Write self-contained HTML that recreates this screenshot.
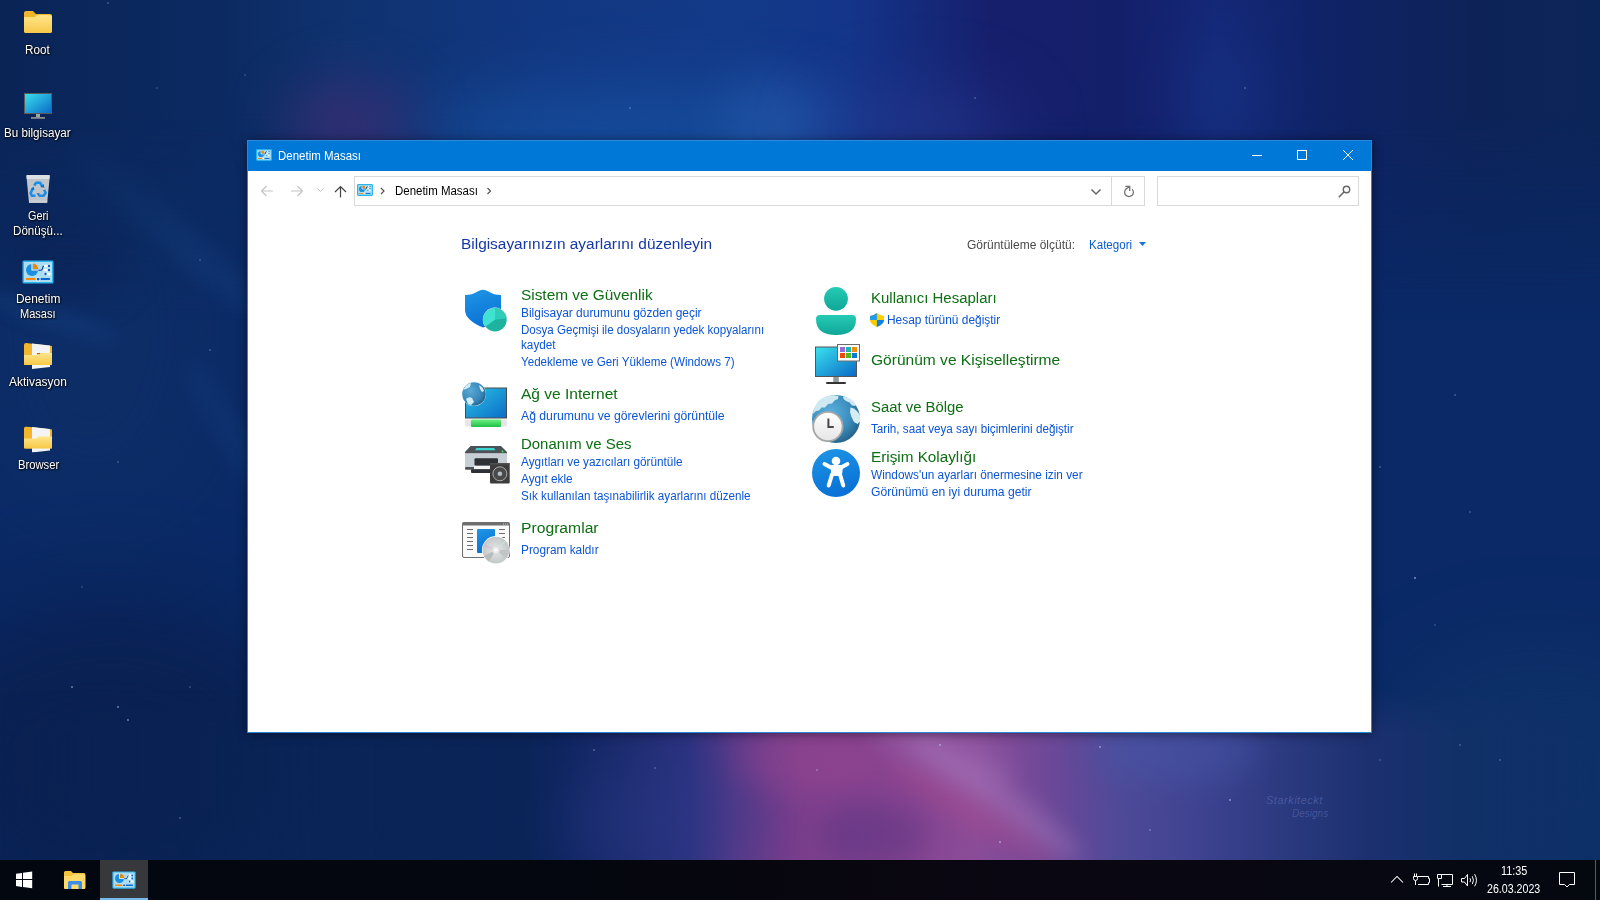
<!DOCTYPE html>
<html><head><meta charset="utf-8">
<style>
*{margin:0;padding:0;box-sizing:border-box}
html,body{width:1600px;height:900px;overflow:hidden}
body{position:relative;font-family:"Liberation Sans", sans-serif;background:#0c2a5c}
.t{position:absolute;white-space:nowrap;transform-origin:0 0}
.box{position:absolute}
</style></head><body>
<div class="box" style="left:0;top:0;width:1600px;height:900px;overflow:hidden;background:#0a2966">
<!-- left strip variation -->
<div class="box" style="left:-60px;top:120px;width:300px;height:420px;border-radius:50%;background:#0f3068;opacity:.6;filter:blur(50px)"></div>
<div class="box" style="left:-100px;top:600px;width:420px;height:320px;border-radius:50%;background:#0a2050;opacity:.9;filter:blur(50px)"></div>
<div class="box" style="left:30px;top:205px;width:260px;height:34px;border-radius:50%;background:#1b4c8e;opacity:.35;filter:blur(10px);transform:rotate(42deg)"></div>
<div class="box" style="left:-20px;top:305px;width:140px;height:22px;border-radius:50%;background:#1b4c8e;opacity:.3;filter:blur(8px);transform:rotate(18deg)"></div>
<div class="box" style="left:0px;top:200px;width:130px;height:100px;border-radius:50%;background:#081a48;opacity:.35;filter:blur(20px)"></div>
<div class="box" style="left:150px;top:420px;width:160px;height:24px;border-radius:50%;background:#1b4c8e;opacity:.25;filter:blur(10px);transform:rotate(60deg)"></div>
<!-- top band -->
<div class="box" style="left:0;top:0;width:1600px;height:320px;background:linear-gradient(90deg,#0a2456 0%,#0c2a62 14%,#0f3370 22%,#123782 34%,#133a88 46%,#14358a 53%,#161f6c 62%,#141f6a 70%,#142878 76%,#0f2264 84%,#0d2358 92%,#0c2558 100%);-webkit-mask-image:linear-gradient(180deg,#000 0%,#000 35%,transparent 100%)"></div>
<div class="box" style="left:410px;top:90px;width:450px;height:100px;border-radius:50%;background:#1650a0;opacity:.8;filter:blur(35px)"></div>
<div class="box" style="left:720px;top:80px;width:110px;height:90px;border-radius:50%;background:#2a5cb0;opacity:.5;filter:blur(25px)"></div>
<div class="box" style="left:285px;top:80px;width:130px;height:90px;border-radius:50%;background:#3a2e74;opacity:.8;filter:blur(28px)"></div>
<div class="box" style="left:820px;top:90px;width:200px;height:90px;border-radius:50%;background:#283890;opacity:.6;filter:blur(35px)"></div>
<div class="box" style="left:1190px;top:40px;width:70px;height:110px;border-radius:50%;background:#1a3a8e;opacity:.45;filter:blur(30px)"></div>
<!-- right strip -->
<div class="box" style="left:1380px;top:650px;width:320px;height:250px;border-radius:50%;background:#10346a;opacity:.8;filter:blur(45px)"></div>
<!-- bottom nebula -->
<div class="box" style="left:0;top:690px;width:1600px;height:170px;background:linear-gradient(90deg,rgba(10,36,86,0) 0%,rgba(10,36,86,.9) 20%,#0b2458 33%,#0e2560 35%,#1a2a6c 38.5%,#2c3280 43%,#5a3a8a 46%,#7a3e8c 50%,#8a4490 56%,#8a4c98 61%,#6a4898 66%,#4e4a98 70%,#3e4290 75%,#2c3a80 80%,#1c3070 85.5%,#113068 91%,rgba(14,48,104,.6) 100%);-webkit-mask-image:linear-gradient(180deg,transparent 0%,#000 25%,#000 100%)"></div>
<div class="box" style="left:1090px;top:715px;width:170px;height:70px;border-radius:50%;background:#4658a8;opacity:.45;filter:blur(16px)"></div>
<div class="box" style="left:740px;top:725px;width:130px;height:70px;border-radius:50%;background:#a04890;opacity:.4;filter:blur(16px)"></div>
<div class="box" style="left:890px;top:780px;width:210px;height:34px;border-radius:50%;background:#b080c0;opacity:.4;filter:blur(10px);transform:rotate(36deg)"></div>
<div class="box" style="left:880px;top:800px;width:190px;height:30px;border-radius:50%;background:#a84a8c;opacity:.4;filter:blur(10px);transform:rotate(32deg)"></div>
<div class="box" style="left:560px;top:760px;width:200px;height:120px;border-radius:50%;background:#2a3a88;opacity:.35;filter:blur(25px)"></div>
<div class="box" style="left:870px;top:728px;width:150px;height:50px;border-radius:50%;background:#a070b8;opacity:.35;filter:blur(12px);transform:rotate(20deg)"></div>
<div class="box" style="left:820px;top:800px;width:110px;height:70px;border-radius:50%;background:#4a3080;opacity:.4;filter:blur(15px)"></div>
<div class="t" style="left:1266px;top:795px;font-size:11px;line-height:11px;font-style:italic;color:rgba(130,150,220,.35);letter-spacing:.5px">Starkiteckt</div>
<div class="t" style="left:1292px;top:809px;font-size:10px;line-height:10px;font-style:italic;color:rgba(130,150,220,.32)">Designs</div>
<svg class="box" style="left:0;top:0" width="1600" height="900"><g fill="#c8d8ff">
<circle cx="108" cy="3" r=".8" opacity=".5"/><circle cx="157" cy="88" r=".7" opacity=".4"/><circle cx="245" cy="75" r=".7" opacity=".4"/><circle cx="630" cy="108" r=".8" opacity=".5"/><circle cx="975" cy="98" r=".8" opacity=".5"/><circle cx="1245" cy="88" r=".8" opacity=".5"/><circle cx="1262" cy="185" r=".8" opacity=".5"/><circle cx="1290" cy="225" r=".7" opacity=".4"/>
<circle cx="1380" cy="467" r=".8" opacity=".5"/><circle cx="1415" cy="578" r="1" opacity=".6"/><circle cx="1455" cy="395" r=".8" opacity=".5"/><circle cx="1210" cy="695" r=".8" opacity=".5"/><circle cx="1470" cy="512" r=".8" opacity=".5"/><circle cx="1435" cy="625" r=".7" opacity=".4"/><circle cx="1500" cy="760" r=".8" opacity=".5"/><circle cx="1460" cy="745" r=".8" opacity=".5"/>
<circle cx="72" cy="687" r=".9" opacity=".6"/><circle cx="118" cy="707" r=".9" opacity=".6"/><circle cx="128" cy="720" r=".9" opacity=".6"/><circle cx="82" cy="587" r=".7" opacity=".4"/><circle cx="190" cy="687" r=".7" opacity=".5"/><circle cx="180" cy="818" r=".8" opacity=".5"/><circle cx="210" cy="350" r=".8" opacity=".5"/><circle cx="118" cy="462" r=".7" opacity=".5"/><circle cx="200" cy="260" r=".7" opacity=".5"/>
<circle cx="594" cy="750" r=".8" opacity=".6"/><circle cx="655" cy="768" r=".8" opacity=".5"/><circle cx="817" cy="770" r=".8" opacity=".6"/><circle cx="940" cy="745" r=".9" opacity=".6"/><circle cx="1100" cy="747" r=".9" opacity=".6"/><circle cx="1150" cy="830" r=".8" opacity=".6"/><circle cx="1000" cy="842" r=".9" opacity=".6"/><circle cx="1230" cy="800" r=".9" opacity=".6"/><circle cx="1380" cy="760" r=".7" opacity=".4"/>
</g></svg>
</div>

<div class="box" style="left:247px;top:140px;width:1125px;height:593px;box-shadow:0 1px 10px rgba(0,0,0,.45)"></div>
<div class="box" style="left:247px;top:140px;width:1125px;height:593px;background:#fff;border:1px solid #2b86d4;border-top-color:#2c8ad8"></div>
<div class="box" style="left:248px;top:141px;width:1123px;height:30px;background:#0078d7"></div>
<div class="box" style="left:354px;top:176px;width:791px;height:30px;border:1px solid #d9d9d9"></div>
<div class="box" style="left:1111px;top:177px;width:1px;height:28px;background:#d9d9d9"></div>
<div class="box" style="left:1157px;top:176px;width:202px;height:30px;border:1px solid #d9d9d9"></div>
<div class="box" style="left:0;top:860px;width:1600px;height:40px;background:linear-gradient(90deg,#03070f 0%,#04070f 35%,#08060f 50%,#0a0712 65%,#090812 78%,#060812 90%,#04080f 100%)"></div>
<div class="box" style="left:100px;top:860px;width:48px;height:40px;background:#37383b"></div>
<div class="box" style="left:100px;top:898px;width:48px;height:2px;background:#76b9ed"></div>
<div class="box" style="left:1595px;top:860px;width:1px;height:40px;background:#5a5a5e"></div>
<svg class="box" style="left:0;top:0" width="1600" height="900" viewBox="0 0 1600 900">
<defs>
<linearGradient id="gBlue" x1="0" y1="0" x2="0.3" y2="1"><stop offset="0" stop-color="#1e96e6"/><stop offset="1" stop-color="#0a72d6"/></linearGradient>
<linearGradient id="gScreen" x1="0" y1="0" x2="1" y2="1"><stop offset="0" stop-color="#3ae2ee"/><stop offset="1" stop-color="#0a68c6"/></linearGradient>
<linearGradient id="gScreen2" x1="0" y1="0" x2="1" y2="1"><stop offset="0" stop-color="#2cc4e4"/><stop offset="1" stop-color="#0a6cc8"/></linearGradient>
<linearGradient id="gTeal" x1="0" y1="0" x2="0" y2="1"><stop offset="0" stop-color="#25cbb4"/><stop offset="1" stop-color="#10a698"/></linearGradient>
<radialGradient id="gGlobe" cx="0.35" cy="0.35" r="0.75"><stop offset="0" stop-color="#5aaad6"/><stop offset="0.7" stop-color="#3584b6"/><stop offset="1" stop-color="#1d5a80"/></radialGradient>
<radialGradient id="gCD" cx="0.5" cy="0.5" r="0.5"><stop offset="0" stop-color="#f4f6f6"/><stop offset="0.35" stop-color="#d8dcdc"/><stop offset="1" stop-color="#c4c8c8"/></radialGradient>
<linearGradient id="gFolder" x1="0" y1="0" x2="0" y2="1"><stop offset="0" stop-color="#ffe58a"/><stop offset="1" stop-color="#f7c848"/></linearGradient>
<linearGradient id="gGreen" x1="0" y1="0" x2="0" y2="1"><stop offset="0" stop-color="#6af27e"/><stop offset="1" stop-color="#1fbf48"/></linearGradient>
<radialGradient id="gGlobe2" cx="0.38" cy="0.38" r="0.72"><stop offset="0" stop-color="#5cb2e0"/><stop offset="0.6" stop-color="#3a8cbc"/><stop offset="1" stop-color="#1f5a7e"/></radialGradient>
<linearGradient id="gClock" x1="0" y1="0" x2="0" y2="1"><stop offset="0" stop-color="#ffffff"/><stop offset="1" stop-color="#e6e6e6"/></linearGradient>
<symbol id="cps" viewBox="0 0 16 12">
 <rect x="0.6" y="0.6" width="14.8" height="10.8" rx="0.8" fill="#b2e2f7" stroke="#2eb2ef" stroke-width="1.2"/>
 <circle cx="5" cy="5" r="3.1" fill="#1a8ee0"/>
 <path d="M5.4 1.5 Q8.5 1.7 8.5 4.6 L5.4 4.6 Z" fill="#f08a00"/>
 <path d="M5 1.8 V5 H8.3" stroke="#e8f6fc" stroke-width="0.7" fill="none"/>
 <path d="M8.4 5.2 Q9.2 5.3 9.4 4 Q9.6 2.5 10.8 2.5" stroke="#0a4ca6" stroke-width="0.9" fill="none"/>
 <rect x="10.8" y="2" width="1.6" height="1" fill="#fff"/><circle cx="13" cy="2.5" r="0.6" fill="#0a5cc0"/>
 <rect x="10.8" y="4" width="1.6" height="1" fill="#fff"/><circle cx="13" cy="4.5" r="0.6" fill="#0a5cc0"/>
 <circle cx="11" cy="6.5" r="0.6" fill="#0a5cc0"/><rect x="11.6" y="6" width="1.6" height="1" fill="#fff"/>
 <rect x="2" y="8.9" width="4.5" height="1" fill="#f08a00"/><rect x="6.5" y="8.9" width="1.5" height="1" fill="#fff"/><rect x="8.5" y="8.9" width="5" height="1" fill="#0a6ad0"/>
</symbol>
<symbol id="cp" viewBox="0 0 32 24">
 <rect x="0.5" y="0.5" width="31" height="23" rx="1.5" fill="#2fb6f0"/>
 <rect x="2" y="2" width="28" height="20" fill="#acdcf2"/>
 <circle cx="10" cy="10" r="6" fill="#1a8ee0"/>
 <path d="M10.8 3.6 A6.2 6.2 0 0 1 16.4 9.2 L10.8 9.2 Z" fill="#f08a00"/>
 <path d="M10 3.5 L10 10 L16.5 10" stroke="#f4fbff" stroke-width="1.1" fill="none"/>
 <rect x="21" y="4.2" width="8.5" height="3.6" rx="1.8" fill="#c6ebfa"/>
 <rect x="21" y="8.2" width="8.5" height="3.6" rx="1.8" fill="#c6ebfa"/>
 <rect x="21" y="12.2" width="8.5" height="3.6" rx="1.8" fill="#c6ebfa"/>
 <path d="M16.3 10.2 L18.8 10.2 Q20.3 10.2 20.5 8.5 L20.8 7.2 Q21 6 22.3 6 L22.6 6" stroke="#0a3c88" stroke-width="1.1" fill="none"/>
 <rect x="22.2" y="5" width="3.2" height="2" fill="#fff"/><circle cx="27" cy="6" r="1.2" fill="#0a5cc0"/>
 <rect x="22.2" y="9" width="3.2" height="2" fill="#fff"/><circle cx="27" cy="10" r="1.2" fill="#0a5cc0"/>
 <circle cx="23.5" cy="14" r="1.2" fill="#0a5cc0"/><rect x="25" y="13" width="3.4" height="2" fill="#fff"/>
 <rect x="4" y="18.1" width="10" height="2" rx="0.5" fill="#ff8a00"/>
 <rect x="18.2" y="18.1" width="9.8" height="2" rx="0.5" fill="#0a6ad0"/>
 <circle cx="16.1" cy="19.1" r="2" fill="#0a5cc0" stroke="#fff" stroke-width="1"/>
</symbol>
<symbol id="folder" viewBox="0 0 28 22">
 <path d="M0 2 Q0 0 2 0 L9 0 L12 3 L26 3 Q28 3 28 5 L28 20 Q28 22 26 22 L2 22 Q0 22 0 20 Z" fill="#f2b52c"/>
 <path d="M0 6 L11 6 L13 4 L26 4 Q28 4 28 6 L28 20 Q28 22 26 22 L2 22 Q0 22 0 20 Z" fill="url(#gFolder)"/>
</symbol>
<symbol id="ofolder" viewBox="0 0 28 26">
 <path d="M0 2 Q0 0 2 0 L28 3 L28 22 L0 22 Z" fill="#f2b52c"/>
 <path d="M8 0.5 L26 2.5 L26 24 L8 26 Z" fill="#f4f4f4"/>
 <path d="M0 12 L12 12 L14 10 L28 10 L28 21 Q28 22 26 22 L2 22 Q0 22 0 20 Z" fill="url(#gFolder)"/>
</symbol>
</defs>

<!-- title bar icon -->
<use href="#cps" x="256" y="149" width="16" height="12"/>
<!-- title controls -->
<path d="M1252 155.5 H1262" stroke="#fff" stroke-width="1"/>
<rect x="1297.5" y="150.5" width="9" height="9" stroke="#fff" stroke-width="1" fill="none"/>
<path d="M1343 150 L1353 160 M1353 150 L1343 160" stroke="#fff" stroke-width="1"/>
<!-- toolbar -->
<path d="M261.5 191 H273 M261.5 191 L266.5 186 M261.5 191 L266.5 196" stroke="#c4c4c4" stroke-width="1.2" fill="none"/>
<path d="M302.5 191 H291 M302.5 191 L297.5 186 M302.5 191 L297.5 196" stroke="#c4c4c4" stroke-width="1.2" fill="none"/>
<path d="M317.5 188.5 L320.5 191.5 L323.5 188.5" stroke="#c8c8c8" stroke-width="1" fill="none"/>
<path d="M340.5 197.5 V186.5 M335 192 L340.5 186.5 L346 192" stroke="#444" stroke-width="1.2" fill="none"/>
<use href="#cps" x="357" y="184" width="16" height="12"/>
<path d="M381 188 L384 191 L381 194" stroke="#555" stroke-width="1.2" fill="none"/>
<path d="M487.5 188 L490.5 191 L487.5 194" stroke="#555" stroke-width="1.2" fill="none"/>
<path d="M1091.5 189.5 L1096 194 L1100.5 189.5" stroke="#666" stroke-width="1.5" fill="none"/>
<path d="M1132.1 189.1 A4.4 4.4 0 1 1 1125.9 189.1 L1129.3 186.7 M1125.2 186.4 H1129.7 V190.9" stroke="#727272" stroke-width="1.3" fill="none"/>
<circle cx="1346.5" cy="189.5" r="3.2" stroke="#666" stroke-width="1.4" fill="none"/>
<path d="M1344.2 191.8 L1338.8 197.2" stroke="#666" stroke-width="1.6"/>
<!-- kategori triangle -->
<path d="M1139 242 L1146 242 L1142.5 246 Z" fill="#1a6fd8"/>

<!-- Sistem ve Guvenlik shield -->
<path d="M465 295 Q472 295 477.5 291.5 Q480.5 289.8 483 289.8 Q485.5 289.8 488.5 291.5 Q494 295 501 295 L501 313 Q501 322 483 327.6 Q465 320 465 310 Z" fill="url(#gBlue)"/>
<circle cx="495" cy="319.8" r="12.2" fill="#fff"/>
<circle cx="495" cy="319.8" r="11.7" fill="#1db39f"/>
<path d="M495 319.8 L495 308.1 A11.7 11.7 0 0 0 485.6 326.6 Z" fill="#3ee3d2"/>
<path d="M495 319.8 L495 308.1 A11.7 11.7 0 0 1 506.6 318.2 Z" fill="#2fcdb9"/>

<!-- Network icon -->
<rect x="465.5" y="388" width="41" height="30" fill="url(#gScreen2)" stroke="#4a4a4a" stroke-width="1"/>
<rect x="465" y="419.5" width="42" height="7" rx="1" fill="#e6e6e6"/>
<rect x="471" y="419.5" width="30" height="7.5" rx="1" fill="url(#gGreen)"/>
<circle cx="474" cy="394" r="12" fill="#fff"/>
<circle cx="474" cy="394" r="11.8" fill="url(#gGlobe)"/>
<path d="M466 399 Q469 396 472 398 L474 402 L471 405 L468 404 Z M463 390 Q466 384 471 383 L470 387 L466 389 Z M479 385 Q483 387 484 391 L482 392 L480 389 Z" fill="#d4ecf6"/>

<!-- Printer icon -->
<path d="M470.5 446 L501 446 L507 452 L507 453.5 L465 453.5 L465 452 Z" fill="#4d5258"/>
<path d="M476.5 448 L494 448 L495.5 450.2 L475 450.2 Z" fill="#3ad8d0"/>
<circle cx="502.5" cy="451.5" r="0.9" fill="#3cf05c"/>
<rect x="465" y="453.5" width="42" height="13.5" fill="#c6ced6"/>
<rect x="465" y="467" width="25" height="2.7" rx="1" fill="#4d5258"/>
<rect x="474.5" y="458.2" width="23.5" height="7.5" rx="1" fill="#2d3034"/>
<rect x="474" y="465.8" width="17" height="3.4" fill="#f4f4f4"/>
<rect x="471" y="469.2" width="20" height="3.8" rx="1" fill="#2d3034"/>
<rect x="490" y="463" width="19.7" height="20.6" rx="1" fill="#3c3c3c"/>
<rect x="490" y="463" width="19.7" height="1.6" fill="#505050"/>
<circle cx="499.9" cy="473.8" r="7" fill="#4a4a4a" stroke="#c8c8c8" stroke-width="0.8"/>
<circle cx="499.9" cy="473.8" r="2.3" fill="#b4c0c8"/>

<!-- Programs icon -->
<rect x="462.5" y="522.5" width="47" height="35" rx="1.5" fill="#fafafa" stroke="#6e6e6e" stroke-width="1"/>
<rect x="462.5" y="522.5" width="47" height="3" fill="#6e6e6e"/>
<g fill="#6e6e6e"><circle cx="503.5" cy="524" r="0.55" fill="#ddd"/><circle cx="505.6" cy="524" r="0.55" fill="#ddd"/><circle cx="507.6" cy="524" r="0.55" fill="#ddd"/>
<rect x="467" y="529" width="6" height="1"/><rect x="467" y="533" width="6" height="1"/><rect x="467" y="537" width="6" height="1"/><rect x="467" y="541" width="6" height="1"/><rect x="467" y="545" width="6" height="1"/><rect x="467" y="549" width="6" height="1"/>
<rect x="499" y="529" width="6" height="1"/><rect x="499" y="533" width="6" height="1"/><rect x="499" y="537" width="6" height="1"/></g>
<rect x="477" y="529" width="18" height="24" rx="1" fill="url(#gBlue)"/>
<circle cx="495.9" cy="550.1" r="14" fill="#fff"/>
<circle cx="495.9" cy="550.1" r="13.4" fill="url(#gCD)"/>
<path d="M495.9 550.1 L484 556 A13.4 13.4 0 0 0 489 561.5 Z" fill="#b8bcbc"/>
<path d="M495.9 550.1 L509 550 A13.4 13.4 0 0 1 506 558 Z" fill="#c0c4c4"/>
<path d="M492 548.5 L484.5 545.5" stroke="#f0a0e8" stroke-width="1" opacity=".8"/><path d="M499.5 547 L505.5 541" stroke="#c8f0d0" stroke-width="1" opacity=".8"/>
<circle cx="495.9" cy="550.1" r="3.8" fill="#ececec" stroke="#d0d0d0" stroke-width="0.6"/>
<circle cx="495.9" cy="550.1" r="1.4" fill="#fff"/>

<!-- User icon -->
<circle cx="836" cy="298.8" r="11.9" fill="url(#gTeal)"/>
<path d="M816 319 Q816 315 820 315 L852 315 Q856 315 856 319 Q856 335 836 335 Q816 335 816 319 Z" fill="url(#gTeal)"/>
<!-- UAC shield -->
<path d="M870 316 Q873 316 876.9 313 Q880.8 316 884 316 L884 320 Q884 324 876.9 327 Q870 324 870 320 Z" fill="#ffcc00"/>
<path d="M870 316 Q873 316 876.9 313 L876.9 320 L870 320 Z" fill="#1e9ae8"/>
<path d="M876.9 320 L884 320 Q884 324 876.9 327 Z" fill="#0a84e8"/>

<!-- Appearance monitor -->
<rect x="815.5" y="347" width="41" height="29.5" fill="url(#gScreen)" stroke="#555" stroke-width="1"/>
<rect x="833.3" y="377" width="5.5" height="5" fill="#8f999f"/>
<rect x="826" y="382" width="20" height="2" rx="1" fill="#333"/>
<rect x="837.5" y="344.5" width="22" height="16.5" fill="#fff" stroke="#6e6a6a" stroke-width="1"/>
<rect x="840" y="347" width="5" height="5" fill="#9a6ad8"/><rect x="846" y="347" width="5" height="5" fill="#1ab8a8"/><rect x="852" y="347" width="5" height="5" fill="#f08a10"/>
<rect x="840" y="353" width="5" height="5" fill="#e84a10"/><rect x="846" y="353" width="5" height="5" fill="#50b820"/><rect x="852" y="353" width="5" height="5" fill="#0a78d8"/>

<!-- Globe + clock -->
<circle cx="836" cy="419" r="24" fill="url(#gGlobe2)"/>
<path d="M813 414 Q814 405 820 399.5 Q827 395 834 395.2 L838.5 396 L838 399 L834.5 400.5 L832 403.5 L828 404 L825 407.5 L821.5 407.5 L819 410.5 L816 411 Z" fill="#cfe8f2"/>
<path d="M843 396.2 Q850 397.5 855 402.5 L855.5 406 L852 405.5 L849.5 402.5 L846 401 L843.5 399 Z" fill="#cfe8f2"/>
<path d="M850.5 407.5 Q857.5 409 860 416 L860 421.5 L857.5 424 L854 422 L851.5 417 L850 412 Z" fill="#d6ecf4"/>
<circle cx="827.9" cy="426.5" r="15.6" fill="#a6a6a6"/>
<circle cx="827.9" cy="426.5" r="13.8" fill="url(#gClock)"/>
<path d="M828.4 418.4 V427 H833.8" stroke="#4a4a4a" stroke-width="2" fill="none"/>

<!-- Accessibility -->
<circle cx="836" cy="473" r="24" fill="url(#gBlue)"/>
<circle cx="836" cy="461" r="4.3" fill="#fff"/>
<path d="M824.5 464 L831.5 467.8 M847.5 464 L840.5 467.8" stroke="#fff" stroke-width="4" stroke-linecap="round"/>
<path d="M831 467 L841 467 L840 474.5 L843.3 485.5 M832 474.5 L828.7 485.5" stroke="#fff" stroke-width="4" stroke-linecap="round" stroke-linejoin="round" fill="none"/>
<path d="M830.5 466.5 L841.5 466.5 L840.5 476 L831.5 476 Z" fill="#fff"/>

<!-- Desktop icons -->
<use href="#folder" x="24" y="11" width="28" height="22"/>
<rect x="24.5" y="93.5" width="27" height="20" fill="url(#gScreen)" stroke="#5a5a5a" stroke-width="1"/>
<rect x="36" y="114" width="4" height="3" fill="#9aa"/>
<rect x="31" y="117" width="14" height="1.8" fill="#8a8a8a"/>
<path d="M26.4 176 L49.8 176 L47.2 202.8 L29 202.8 Z" fill="#bfc5cb"/>
<path d="M26.4 175 L49.8 175 L49.4 179 L26.8 179 Z" fill="#dde0e3"/>
<path d="M29 200.5 L47.2 200.5 L47.2 202.8 L29 202.8 Z" fill="#cdd1d5"/>
<g stroke="#1a8ee8" stroke-width="2.6" fill="none" stroke-linejoin="round">
<path d="M34.2 185.5 L36.2 182.8 L40.2 182.8 L42.5 186.8"/>
<path d="M44.2 189.8 L45.6 193 L43.6 195.8 L39.5 195.8"/>
<path d="M35.5 195.8 L32 195.8 L30.6 193 L32.6 189"/>
</g>
<path d="M40.5 187 L44.5 187.8 L43.5 184 Z M36.5 193 L39.5 197.5 L39.5 193.5 Z M33.5 186.5 L30.5 189.5 L34.5 190 Z" fill="#0a6ed0"/>
<use href="#cp" x="22" y="260" width="32" height="24"/>
<use href="#ofolder" x="24" y="343" width="28" height="26"/>
<rect x="37" y="353" width="3" height="1.2" fill="#e05030"/>
<use href="#ofolder" x="24" y="426.5" width="28" height="26"/>

<!-- taskbar -->
<path d="M16 873.8 L22 872.9 L22 879 L16 879 Z M23 872.8 L32.2 871.6 L32.2 879 L23 879 Z M16 880 L22 880 L22 886.9 L16 886 Z M23 880 L32.2 880 L32.2 888.2 L23 887 Z" fill="#fff"/>
<path d="M64 872.5 Q64 871 65.5 871 L71 871 L73 873 L84 873 Q85.3 873 85.3 874.5 L85.3 887.5 Q85.3 889 84 889 L65.5 889 Q64 889 64 887.5 Z" fill="#f5c240"/>
<path d="M64 876 L72 876 L74 874 L84 874 Q85.3 874 85.3 875.5 L85.3 887.5 Q85.3 889 84 889 L65.5 889 Q64 889 64 887.5 Z" fill="#ffd96a"/>
<path d="M68 889 L68 882.5 Q68 881 69.5 881 L80.5 881 Q82 881 82 882.5 L82 889 L78.5 889 L78.5 884.5 L71.5 884.5 L71.5 889 Z" fill="#3a8ee8"/>
<use href="#cp" x="112" y="871" width="24" height="18"/>

<!-- tray -->
<path d="M1391 882.5 L1397 876.5 L1403 882.5" stroke="#fff" stroke-width="1.05" fill="none"/>
<g stroke="#fff" stroke-width="1" fill="none">
<path d="M1418 876.5 H1428.5 V878.5 H1429.5 V882.5 H1428.5 V884.5 H1418"/>
<path d="M1413.5 876.5 H1417.5 V878.5 Q1417.5 880.5 1415.5 880.5 Q1413.5 880.5 1413.5 878.5 Z"/>
<path d="M1414.5 873.5 V876.5 M1416.5 873.5 V876.5 M1415.5 880.5 V885"/>
<path d="M1441.5 874.5 H1452.5 V884.5 H1441.5 M1447 884.5 V886.5 M1443 886.5 H1451 M1437.5 874.5 H1441.5 V878.5 H1437.5 Z M1438.5 878.5 V886.5"/>
<path d="M1461.5 878.5 H1464.5 L1467.5 874.5 V886 L1464.5 882 H1461.5 Z"/>
<path d="M1470 878.3 Q1471.2 880.2 1470 882.1 M1472.3 876.3 Q1474.6 880.2 1472.3 884.1 M1474.6 874.2 Q1478.3 880.2 1474.6 886.3"/>
<path d="M1559.5 872.5 H1574.5 V884.5 H1569.5 L1567 887 L1564.5 884.5 H1559.5 Z"/>
</g>
</svg>

<div id="t0" class="t" style="left:278.00px;top:149.84px;font-size:12px;line-height:12px;color:#ffffff;transform:scaleX(0.9573);">Denetim Masası</div>
<div id="t1" class="t" style="left:394.60px;top:184.84px;font-size:12px;line-height:12px;color:#000000;transform:scaleX(0.9561);">Denetim Masası</div>
<div id="t2" class="t" style="left:461.00px;top:235.68px;font-size:15.5px;line-height:15.5px;color:#1538a8;transform:scaleX(0.9943);">Bilgisayarınızın ayarlarını düzenleyin</div>
<div id="t3" class="t" style="left:967.00px;top:238.84px;font-size:12px;line-height:12px;color:#4a4a4a;transform:scaleX(0.9994);">Görüntüleme ölçütü:</div>
<div id="t4" class="t" style="left:1089.40px;top:238.84px;font-size:12px;line-height:12px;color:#0a5bd0;transform:scaleX(0.9641);">Kategori</div>
<div id="t5" class="t" style="left:521.40px;top:286.88px;font-size:15.5px;line-height:15.5px;color:#0d6e12;transform:scaleX(0.9919);">Sistem ve Güvenlik</div>
<div id="t6" class="t" style="left:521.40px;top:306.84px;font-size:12px;line-height:12px;color:#0c55d4;transform:scaleX(0.9954);">Bilgisayar durumunu gözden geçir</div>
<div id="t7" class="t" style="left:521.40px;top:323.84px;font-size:12px;line-height:12px;color:#0c55d4;transform:scaleX(0.9646);">Dosya Geçmişi ile dosyaların yedek kopyalarını</div>
<div id="t8" class="t" style="left:521.40px;top:338.84px;font-size:12px;line-height:12px;color:#0c55d4;transform:scaleX(0.9785);">kaydet</div>
<div id="t9" class="t" style="left:521.40px;top:355.84px;font-size:12px;line-height:12px;color:#0c55d4;transform:scaleX(0.9675);">Yedekleme ve Geri Yükleme (Windows 7)</div>
<div id="t10" class="t" style="left:521.40px;top:385.88px;font-size:15.5px;line-height:15.5px;color:#0d6e12;transform:scaleX(1.0009);">Ağ ve Internet</div>
<div id="t11" class="t" style="left:521.40px;top:409.84px;font-size:12px;line-height:12px;color:#0c55d4;transform:scaleX(1.0174);">Ağ durumunu ve görevlerini görüntüle</div>
<div id="t12" class="t" style="left:521.40px;top:435.88px;font-size:15.5px;line-height:15.5px;color:#0d6e12;transform:scaleX(0.9651);">Donanım ve Ses</div>
<div id="t13" class="t" style="left:521.40px;top:455.84px;font-size:12px;line-height:12px;color:#0c55d4;transform:scaleX(0.9822);">Aygıtları ve yazıcıları görüntüle</div>
<div id="t14" class="t" style="left:521.40px;top:472.84px;font-size:12px;line-height:12px;color:#0c55d4;transform:scaleX(0.9831);">Aygıt ekle</div>
<div id="t15" class="t" style="left:521.40px;top:489.84px;font-size:12px;line-height:12px;color:#0c55d4;transform:scaleX(0.9724);">Sık kullanılan taşınabilirlik ayarlarını düzenle</div>
<div id="t16" class="t" style="left:521.40px;top:519.88px;font-size:15.5px;line-height:15.5px;color:#0d6e12;transform:scaleX(1.0121);">Programlar</div>
<div id="t17" class="t" style="left:521.40px;top:543.84px;font-size:12px;line-height:12px;color:#0c55d4;transform:scaleX(0.9860);">Program kaldır</div>
<div id="t18" class="t" style="left:871.40px;top:289.88px;font-size:15.5px;line-height:15.5px;color:#0d6e12;transform:scaleX(0.9655);">Kullanıcı Hesapları</div>
<div id="t19" class="t" style="left:887.40px;top:313.84px;font-size:12px;line-height:12px;color:#0c55d4;transform:scaleX(0.9923);">Hesap türünü değiştir</div>
<div id="t20" class="t" style="left:871.40px;top:351.88px;font-size:15.5px;line-height:15.5px;color:#0d6e12;transform:scaleX(1.0029);">Görünüm ve Kişiselleştirme</div>
<div id="t21" class="t" style="left:871.40px;top:398.88px;font-size:15.5px;line-height:15.5px;color:#0d6e12;transform:scaleX(0.9594);">Saat ve Bölge</div>
<div id="t22" class="t" style="left:871.40px;top:422.84px;font-size:12px;line-height:12px;color:#0c55d4;transform:scaleX(0.9737);">Tarih, saat veya sayı biçimlerini değiştir</div>
<div id="t23" class="t" style="left:871.40px;top:448.88px;font-size:15.5px;line-height:15.5px;color:#0d6e12;transform:scaleX(0.9849);">Erişim Kolaylığı</div>
<div id="t24" class="t" style="left:871.40px;top:468.84px;font-size:12px;line-height:12px;color:#0c55d4;transform:scaleX(0.9840);">Windows'un ayarları önermesine izin ver</div>
<div id="t25" class="t" style="left:871.40px;top:485.84px;font-size:12px;line-height:12px;color:#0c55d4;transform:scaleX(1.0117);">Görünümü en iyi duruma getir</div>
<div id="t26" class="t" style="left:25.30px;top:43.84px;font-size:12px;line-height:12px;color:#fff;transform:scaleX(0.9740);text-shadow:0 0 2px rgba(0,0,0,.9),1px 1px 2px rgba(0,0,0,.9);">Root</div>
<div id="t27" class="t" style="left:4.20px;top:126.84px;font-size:12px;line-height:12px;color:#fff;transform:scaleX(0.9694);text-shadow:0 0 2px rgba(0,0,0,.9),1px 1px 2px rgba(0,0,0,.9);">Bu bilgisayar</div>
<div id="t28" class="t" style="left:27.50px;top:210.04px;font-size:12px;line-height:12px;color:#fff;transform:scaleX(0.9042);text-shadow:0 0 2px rgba(0,0,0,.9),1px 1px 2px rgba(0,0,0,.9);">Geri</div>
<div id="t29" class="t" style="left:13.30px;top:224.84px;font-size:12px;line-height:12px;color:#fff;transform:scaleX(0.9674);text-shadow:0 0 2px rgba(0,0,0,.9),1px 1px 2px rgba(0,0,0,.9);">Dönüşü...</div>
<div id="t30" class="t" style="left:15.60px;top:293.14px;font-size:12px;line-height:12px;color:#fff;transform:scaleX(0.9936);text-shadow:0 0 2px rgba(0,0,0,.9),1px 1px 2px rgba(0,0,0,.9);">Denetim</div>
<div id="t31" class="t" style="left:19.70px;top:307.84px;font-size:12px;line-height:12px;color:#fff;transform:scaleX(0.9202);text-shadow:0 0 2px rgba(0,0,0,.9),1px 1px 2px rgba(0,0,0,.9);">Masası</div>
<div id="t32" class="t" style="left:9.20px;top:375.84px;font-size:12px;line-height:12px;color:#fff;transform:scaleX(0.9960);text-shadow:0 0 2px rgba(0,0,0,.9),1px 1px 2px rgba(0,0,0,.9);">Aktivasyon</div>
<div id="t33" class="t" style="left:17.50px;top:458.84px;font-size:12px;line-height:12px;color:#fff;transform:scaleX(0.9360);text-shadow:0 0 2px rgba(0,0,0,.9),1px 1px 2px rgba(0,0,0,.9);">Browser</div>
<div id="t34" class="t" style="left:1500.60px;top:864.84px;font-size:12px;line-height:12px;color:#fff;transform:scaleX(0.9025);">11:35</div>
<div id="t35" class="t" style="left:1487.10px;top:882.84px;font-size:12px;line-height:12px;color:#fff;transform:scaleX(0.8874);">26.03.2023</div>
</body></html>
